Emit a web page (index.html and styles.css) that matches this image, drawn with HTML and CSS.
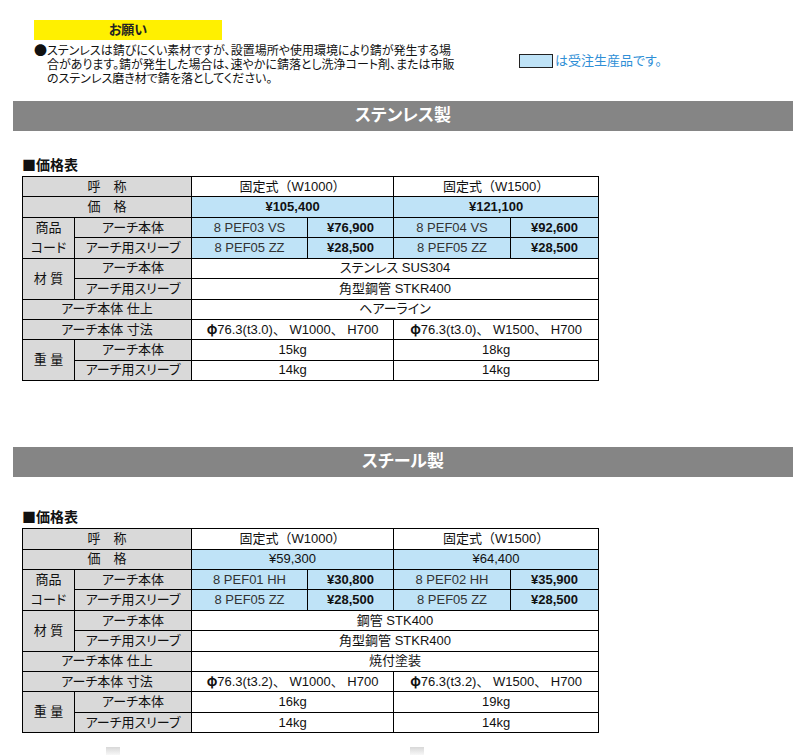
FILE: index.html
```html
<!DOCTYPE html>
<html lang="ja">
<head>
<meta charset="utf-8">
<title>価格表</title>
<link rel="stylesheet" href="styles.css">
</head>
<body>
<div class="notice">
  <div class="request">お願い</div>
  <div class="notice-row">
    <p class="notice-text"><span class="bullet">●</span>ステンレスは錆びにくい素材ですが、設置場所や使用環境により錆が発生する場<br>合があります。錆が発生した場合は、速やかに錆落とし洗浄コート剤、または市販<br>のステンレス磨き材で錆を落としてください。</p>
    <div class="legend"><span class="legend-box"></span><span class="legend-text">は受注生産品です。</span></div>
  </div>
</div>

<div class="band band-first">ステンレス製</div>
<h2 class="table-title">■価格表</h2>
<table class="price">
  <colgroup><col class="c1"><col class="c2"><col class="c3"><col class="c4"><col class="c5"><col class="c6"></colgroup>
  <tr><td class="lbl" colspan="2">呼　称</td><td class="full" colspan="2">固定式（W1000）</td><td class="full" colspan="2">固定式（W1500）</td></tr>
  <tr><td class="lbl" colspan="2">価　格</td><td class="blue b" colspan="2">¥105,400</td><td class="blue b" colspan="2">¥121,100</td></tr>
  <tr><td class="lbl two" rowspan="2">商品<br>コード</td><td class="lbl">アーチ本体</td><td class="blue code">8 PEF03 VS</td><td class="blue b">¥76,900</td><td class="blue code">8 PEF04 VS</td><td class="blue b">¥92,600</td></tr>
  <tr><td class="lbl">アーチ用スリーブ</td><td class="blue code">8 PEF05 ZZ</td><td class="blue b">¥28,500</td><td class="blue code">8 PEF05 ZZ</td><td class="blue b">¥28,500</td></tr>
  <tr><td class="lbl" rowspan="2">材 質</td><td class="lbl">アーチ本体</td><td colspan="4">ステンレス SUS304</td></tr>
  <tr><td class="lbl">アーチ用スリーブ</td><td colspan="4">角型鋼管 STKR400</td></tr>
  <tr><td class="lbl" colspan="2">アーチ本体 仕上</td><td colspan="4">ヘアーライン</td></tr>
  <tr><td class="lbl" colspan="2">アーチ本体 寸法</td><td class="full" colspan="2"><span class="phi">φ</span>76.3(t3.0)、 W1000、 H700</td><td class="full" colspan="2"><span class="phi">φ</span>76.3(t3.0)、 W1500、 H700</td></tr>
  <tr><td class="lbl" rowspan="2">重 量</td><td class="lbl">アーチ本体</td><td colspan="2">15kg</td><td colspan="2">18kg</td></tr>
  <tr><td class="lbl">アーチ用スリーブ</td><td colspan="2">14kg</td><td colspan="2">14kg</td></tr>
</table>

<div class="band band-second">スチール製</div>
<h2 class="table-title title-second">■価格表</h2>
<table class="price">
  <colgroup><col class="c1"><col class="c2"><col class="c3"><col class="c4"><col class="c5"><col class="c6"></colgroup>
  <tr><td class="lbl" colspan="2">呼　称</td><td class="full" colspan="2">固定式（W1000）</td><td class="full" colspan="2">固定式（W1500）</td></tr>
  <tr><td class="lbl" colspan="2">価　格</td><td class="blue" colspan="2">¥59,300</td><td class="blue" colspan="2">¥64,400</td></tr>
  <tr><td class="lbl two" rowspan="2">商品<br>コード</td><td class="lbl">アーチ本体</td><td class="blue code">8 PEF01 HH</td><td class="blue b">¥30,800</td><td class="blue code">8 PEF02 HH</td><td class="blue b">¥35,900</td></tr>
  <tr><td class="lbl">アーチ用スリーブ</td><td class="blue code">8 PEF05 ZZ</td><td class="blue b">¥28,500</td><td class="blue code">8 PEF05 ZZ</td><td class="blue b">¥28,500</td></tr>
  <tr><td class="lbl" rowspan="2">材 質</td><td class="lbl">アーチ本体</td><td colspan="4">鋼管 STK400</td></tr>
  <tr><td class="lbl">アーチ用スリーブ</td><td colspan="4">角型鋼管 STKR400</td></tr>
  <tr><td class="lbl" colspan="2">アーチ本体 仕上</td><td colspan="4">焼付塗装</td></tr>
  <tr><td class="lbl" colspan="2">アーチ本体 寸法</td><td class="full" colspan="2"><span class="phi">φ</span>76.3(t3.2)、 W1000、 H700</td><td class="full" colspan="2"><span class="phi">φ</span>76.3(t3.2)、 W1500、 H700</td></tr>
  <tr><td class="lbl" rowspan="2">重 量</td><td class="lbl">アーチ本体</td><td colspan="2">16kg</td><td colspan="2">19kg</td></tr>
  <tr><td class="lbl">アーチ用スリーブ</td><td colspan="2">14kg</td><td colspan="2">14kg</td></tr>
</table>

<div class="thumbs"><span class="thumb"></span><span class="thumb thumb-right"></span></div>
</body>
</html>
```

FILE: styles.css
```css
html, body {
  margin: 0;
  padding: 0;
  background: #ffffff;
}
body {
  font-family: "Liberation Sans", "Noto Sans CJK JP", sans-serif;
  color: #111111;
  font-size: 13px;
  font-feature-settings: "palt";
}
.notice {
  padding: 20px 0 0 34px;
}
.request {
  width: 188px;
  height: 20px;
  line-height: 20px;
  background: #fff000;
  text-align: center;
  font-size: 13px;
  font-weight: bold;
  color: #222222;
}
.notice-row {
  display: flex;
  align-items: flex-start;
  margin-top: 3px;
}
.notice-text {
  margin: 0;
  width: 440px;
  font-size: 12px;
  line-height: 14px;
  padding-left: 13px;
  text-indent: -13px;
  white-space: nowrap;
}
.bullet {
  display: inline-block;
  width: 13px;
  text-indent: 0;
  font-family: "Noto Sans CJK JP", sans-serif;
  font-size: 13px;
  font-feature-settings: normal;
}
.legend {
  display: flex;
  align-items: center;
  margin: 11px 0 0 32px;
}
.legend-box {
  width: 32px;
  height: 12px;
  background: #bfe3f7;
  border: 1px solid #222222;
}
.legend-text {
  margin-left: 2px;
  color: #2f8fd6;
  font-size: 13px;
  line-height: 14px;
}
.band {
  margin-left: 13px;
  width: 780px;
  height: 30px;
  line-height: 30px;
  background: #858585;
  color: #ffffff;
  text-align: center;
  font-size: 17px;
  font-weight: bold;
}
.band-first {
  margin-top: 15px;
}
.band-second {
  margin-top: 66px;
}
.table-title {
  margin: 25px 0 4px 22px;
  font-family: "Noto Sans CJK JP", sans-serif;
  font-size: 14px;
  line-height: 16px;
  font-weight: bold;
  color: #111111;
  font-feature-settings: normal;
}
.title-second {
  margin-top: 31px;
}
.price {
  margin-left: 22px;
  border-collapse: collapse;
  table-layout: fixed;
  width: 576px;
}
.c1 { width: 52px; }
.c2 { width: 117px; }
.c3 { width: 116px; }
.c4 { width: 86px; }
.c5 { width: 117px; }
.c6 { width: 88px; }
.price td {
  border: 1px solid #000000;
  height: 19.4px;
  padding: 0;
  line-height: 18px;
  text-align: center;
  vertical-align: middle;
  font-size: 13px;
  white-space: nowrap;
  overflow: hidden;
}
.price td.full {
  font-feature-settings: normal;
}
.phi {
  font-family: "Noto Sans CJK JP", sans-serif;
  font-weight: bold;
}
.price td.lbl {
  background: #d9d9d9;
}
.price td.two {
  line-height: 20px;
}
.price td.blue {
  background: #bfe3f7;
}
.price td.b {
  font-weight: bold;
}
.price td.code {
  color: #333333;
}
.thumbs {
  display: flex;
  margin-top: 14px;
  height: 10px;
}
.thumb {
  width: 14px;
  height: 10px;
  margin-left: 106px;
  background: linear-gradient(#d8d8d8, #ffffff);
}
.thumb-right {
  margin-left: 290px;
}
```
